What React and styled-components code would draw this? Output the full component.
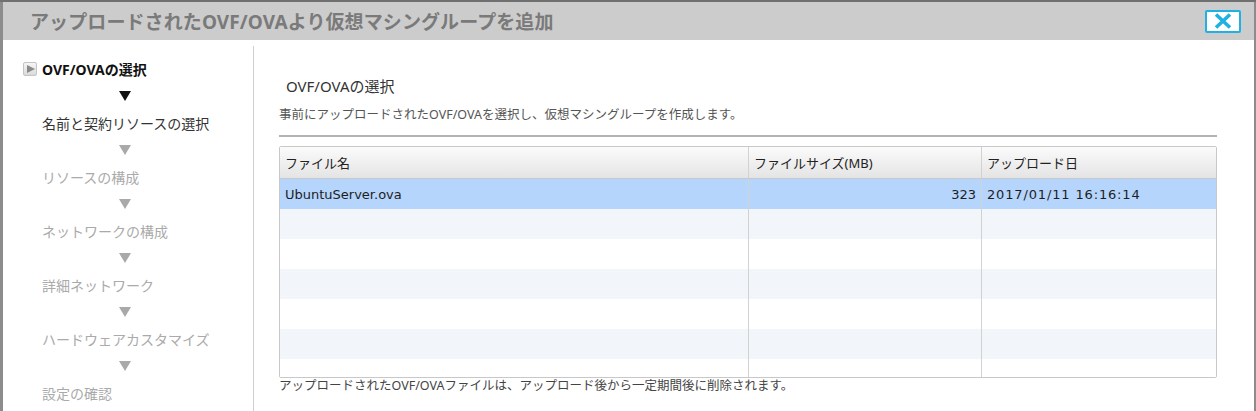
import React from "react";
import styled, { createGlobalStyle } from "styled-components";

const Global = createGlobalStyle`
  html, body { margin: 0; padding: 0; }
  body {
    background: #8c8c8c;
    font-family: "Noto Sans", "Noto Sans CJK JP", sans-serif;
    overflow: hidden;
  }
`;

const Page = styled.div`
  width: 1256px;
  height: 411px;
  background: #8c8c8c;
  border-top: 2px solid #707070;
  box-sizing: border-box;
  padding-left: 3px;
  overflow: hidden;
`;

const Dialog = styled.div`
  width: 1251px;
  height: 409px;
  background: #fff;
  display: flex;
  flex-direction: column;
`;

const TitleBar = styled.div`
  height: 38px;
  background: #cccccc;
  display: flex;
  align-items: center;
  justify-content: space-between;
  padding: 0 13px 0 27px;
  flex-shrink: 0;
`;

const Title = styled.h1`
  margin: 0;
  font-size: 19px;
  font-weight: bold;
  color: #7a7a7a;
  letter-spacing: 0.1px;
`;

const CloseButton = styled.button`
  width: 36px;
  height: 23px;
  border: 2px solid #1fb1e3;
  border-radius: 2px;
  background: #fff;
  padding: 0;
  display: flex;
  align-items: center;
  justify-content: center;
  cursor: pointer;
`;

const Body = styled.div`
  flex: 1;
  display: flex;
  min-height: 0;
`;

const Sidebar = styled.nav`
  width: 250px;
  margin-top: 6px;
  border-right: 1px solid #cfcfcf;
  display: flex;
  flex-direction: column;
  padding-top: 9px;
  flex-shrink: 0;
`;

const StepRow = styled.div`
  height: 27px;
  display: flex;
  align-items: center;
  padding-left: ${(p) => (p.$current ? "20px" : "39px")};
  gap: 5px;
  font-size: 14px;
  font-weight: ${(p) => (p.$current ? "bold" : "normal")};
  color: ${(p) => (p.$current ? "#111" : p.$next ? "#333" : "#aaaaaa")};
  white-space: nowrap;
`;

const StepIcon = styled.span`
  width: 14px;
  height: 14px;
  box-sizing: border-box;
  border: 1px solid #c4c4c4;
  border-radius: 2px;
  background: linear-gradient(#f6f6f6, #dadada);
  display: inline-flex;
  align-items: center;
  justify-content: center;
  &::after {
    content: "";
    border-left: 8px solid #8a8a8a;
    border-top: 4.5px solid transparent;
    border-bottom: 4.5px solid transparent;
    margin-left: 2px;
  }
`;

const ArrowRow = styled.div`
  height: 27px;
  display: flex;
  align-items: center;
  padding-left: 116px;
  &::after {
    content: "";
    border-top: 10px solid ${(p) => (p.$dark ? "#111" : "#a9a9a9")};
    border-left: 6px solid transparent;
    border-right: 6px solid transparent;
  }
`;

const Main = styled.main`
  flex: 1;
  padding: 35px 37px 0 25px;
  display: flex;
  flex-direction: column;
  min-width: 0;
`;

const Heading = styled.h2`
  margin: 0 0 0 7px;
  font-size: 15px;
  font-weight: normal;
  color: #333;
  line-height: 22px;
`;

const Description = styled.p`
  margin: 10px 0 0;
  font-size: 12.5px;
  color: #555;
  line-height: 16px;
`;

const Rule = styled.hr`
  margin: 12px 0 0;
  border: 0;
  border-top: 2px solid #b4b4b4;
`;

const Table = styled.div`
  margin-top: 9px;
  border: 1px solid #c8c8c8;
  border-radius: 2px;
  display: flex;
  flex-direction: column;
`;

const cols = "468px 233px 1fr";

const HeaderRow = styled.div`
  display: grid;
  grid-template-columns: ${cols};
  height: 31px;
  background: linear-gradient(#fbfbfb, #e4e4e4);
  border-bottom: 1px solid #c8c8c8;
`;

const HeaderCell = styled.div`
  display: flex;
  align-items: center;
  padding: 0 5px;
  font-size: 13px;
  color: #222;
  border-left: ${(p) => (p.$first ? "none" : "1px solid #d2d2d2")};
`;

const TableBody = styled.div`
  height: 198px;
  overflow: hidden;
`;

const Row = styled.div`
  display: grid;
  grid-template-columns: ${cols};
  height: 30px;
  background: ${(p) => (p.$selected ? "#b5d5fc" : p.$alt ? "#f2f6fb" : "#fff")};
`;

const Cell = styled.div`
  display: flex;
  align-items: center;
  justify-content: ${(p) => (p.$right ? "flex-end" : "flex-start")};
  padding: 0 5px;
  font-family: "DejaVu Sans", "Noto Sans CJK JP", sans-serif;
  font-size: 13px;
  letter-spacing: ${(p) => (p.$spaced ? "0.85px" : "0")};
  color: #1e1e1e;
  border-left: ${(p) => (p.$first ? "none" : "1px solid #d2d2d2")};
  white-space: nowrap;
`;

const Footnote = styled.p`
  margin: 0;
  font-size: 12.5px;
  color: #444;
  line-height: 16px;
`;

const steps = [
  "名前と契約リソースの選択",
  "リソースの構成",
  "ネットワークの構成",
  "詳細ネットワーク",
  "ハードウェアカスタマイズ",
  "設定の確認",
];

export default function App() {
  const blank = Array.from({ length: 6 });
  return (
    <>
      <Global />
      <Page>
        <Dialog>
          <TitleBar>
            <Title>アップロードされたOVF/OVAより仮想マシングループを追加</Title>
            <CloseButton aria-label="閉じる">
              <svg width="20" height="16" viewBox="0 0 20 16">
                <path d="M3 1.5 L17 14.5 M17 1.5 L3 14.5" stroke="#1fb1e3" strokeWidth="3.6" strokeLinecap="butt" />
              </svg>
            </CloseButton>
          </TitleBar>
          <Body>
            <Sidebar>
              <StepRow $current>
                <StepIcon />
                OVF/OVAの選択
              </StepRow>
              {steps.map((s, i) => (
                <React.Fragment key={s}>
                  <ArrowRow $dark={i === 0} />
                  <StepRow $next={i === 0}>{s}</StepRow>
                </React.Fragment>
              ))}
            </Sidebar>
            <Main>
              <Heading>OVF/OVAの選択</Heading>
              <Description>事前にアップロードされたOVF/OVAを選択し、仮想マシングループを作成します。</Description>
              <Rule />
              <Table>
                <HeaderRow>
                  <HeaderCell $first>ファイル名</HeaderCell>
                  <HeaderCell>ファイルサイズ(MB)</HeaderCell>
                  <HeaderCell>アップロード日</HeaderCell>
                </HeaderRow>
                <TableBody>
                  <Row $selected>
                    <Cell $first>UbuntuServer.ova</Cell>
                    <Cell $right>323</Cell>
                    <Cell $spaced>2017/01/11 16:16:14</Cell>
                  </Row>
                  {blank.map((_, i) => (
                    <Row key={i} $alt={i % 2 === 0}>
                      <Cell $first />
                      <Cell />
                      <Cell />
                    </Row>
                  ))}
                </TableBody>
              </Table>
              <Footnote>アップロードされたOVF/OVAファイルは、アップロード後から一定期間後に削除されます。</Footnote>
            </Main>
          </Body>
        </Dialog>
      </Page>
    </>
  );
}
